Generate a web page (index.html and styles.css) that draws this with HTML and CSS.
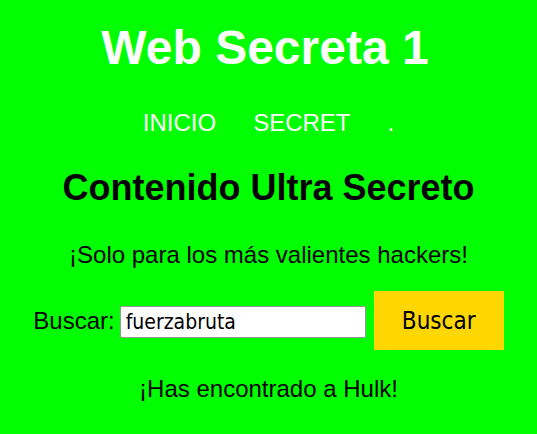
FILE: index.html
```html
<!DOCTYPE html>
<html lang="es">
<head>
<meta charset="utf-8">
<title>Web Secreta 1</title>
<link rel="stylesheet" href="styles.css">
</head>
<body>
<header class="header">
  <h1 class="title">Web Secreta 1</h1>
  <nav class="nav">
    <a class="nav-link" href="#">INICIO</a>
    <a class="nav-link" href="#">SECRET</a>
    <a class="nav-link" href="#">.</a>
  </nav>
</header>
<main class="main">
  <h2 class="subtitle">Contenido Ultra Secreto</h2>
  <p class="lead">¡Solo para los más valientes hackers!</p>
  <form class="search" onsubmit="return false">
    <label class="search-label" for="q">Buscar:</label>
    <input class="search-input" id="q" type="text" value="fuerzabruta">
    <button class="search-button" type="submit">Buscar</button>
  </form>
  <p class="result">¡Has encontrado a Hulk!</p>
</main>
</body>
</html>
```
FILE: styles.css
```css
html, body {
  margin: 0;
  padding: 0;
  background: #00ff00;
}
body {
  font-family: "Liberation Sans", Arial, sans-serif;
  color: #000;
  padding-top: 21px;
  display: flex;
  flex-direction: column;
  align-items: center;
}
.header {
  display: flex;
  flex-direction: column;
  align-items: center;
}
.title {
  margin: 0;
  padding-right: 7px;
  font-size: 48px;
  font-weight: bold;
  color: #fff;
  line-height: 54px;
}
.nav {
  margin-top: 34px;
  display: flex;
  gap: 37px;
}
.nav-link {
  color: #fff;
  text-decoration: none;
  font-size: 24px;
  line-height: 28px;
}
.main {
  display: flex;
  flex-direction: column;
  align-items: center;
}
.subtitle {
  margin: 30px 0 0;
  font-size: 36px;
  font-weight: bold;
  line-height: 41px;
}
.lead {
  margin: 33px 0 0;
  font-size: 24px;
  line-height: 28px;
}
.search {
  margin-top: 22px;
  display: flex;
  align-items: center;
  gap: 8px;
}
.search-label {
  font-size: 24px;
  line-height: 28px;
}
.search-input {
  box-sizing: border-box;
  width: 246px;
  height: 32px;
  margin: 3px 0 0 -3px;
  padding: 0 5px;
  border: 1px solid #999;
  border-radius: 2px;
  background: #fff;
  font-family: "DejaVu Sans", Verdana, sans-serif;
  font-stretch: condensed;
  font-size: 21px;
  color: #000;
}
.search-button {
  box-sizing: border-box;
  width: 130px;
  height: 59px;
  border: none;
  background: #ffd700;
  font-family: "DejaVu Sans", Verdana, sans-serif;
  font-stretch: condensed;
  font-size: 24px;
  color: #000;
}
.result {
  margin: 25px 0 0;
  font-size: 24px;
  line-height: 28px;
}
```
